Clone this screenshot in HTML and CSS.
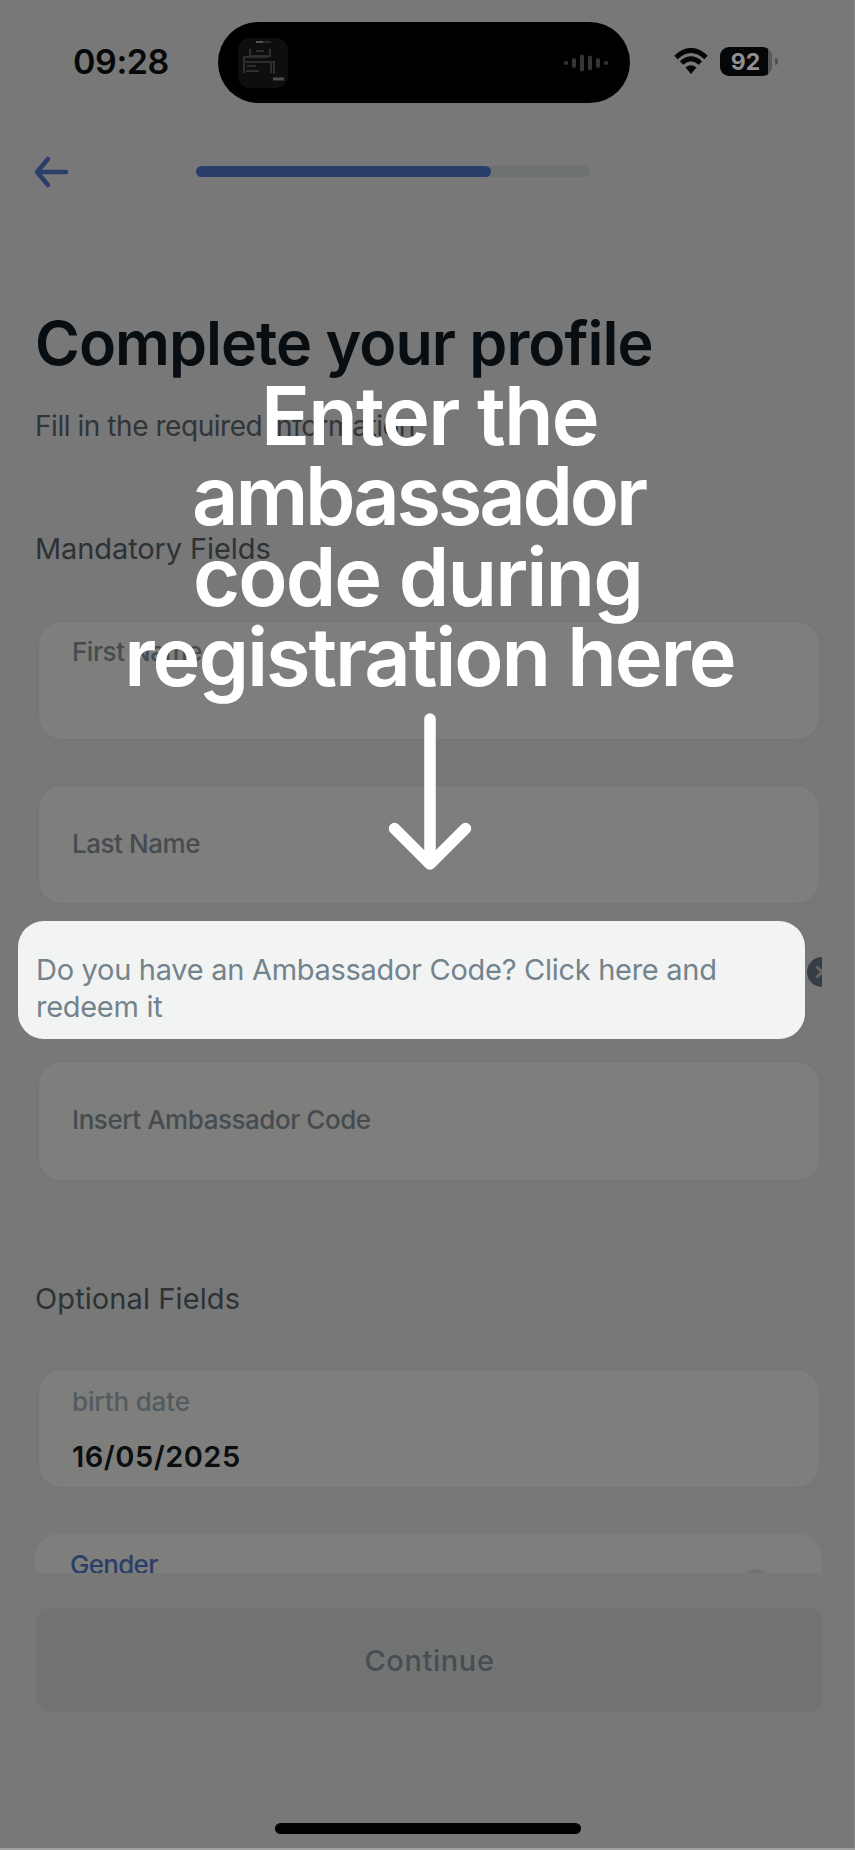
FILE: index.html
```html
<!DOCTYPE html>
<html lang="en">
<head>
<meta charset="utf-8">
<title>Complete your profile</title>
<link rel="stylesheet" href="styles.css">
</head>
<body>
<div class="screen">
  <header class="status">
    <span class="clock">09:28</span>
    <div class="island">
      <svg class="album" viewBox="0 0 50 50" width="50" height="50">
        <rect width="50" height="50" rx="12" fill="#0e0e0e"/>
        <g fill="none" stroke="#2c2e30" stroke-width="2">
          <path d="M18 4h15" stroke="#26282a"/><path d="M18 4h7" stroke="#505254"/>
          <path d="M12 11v7h20v-7M18 13h8M6 18v17M6 24h30v12M6 19h24M9 28h9M8 33h13M33 25v10"/>
          <path d="M35 41h11" stroke="#4c4e50" stroke-width="3"/>
        </g>
      </svg>
      <svg class="wave" viewBox="0 0 46 20" width="46" height="20" stroke="#343637" stroke-width="4" stroke-linecap="round">
        <path d="M3 10h.1M11 7v6M19 3.500v13M27 4.500v11M35 7v6M43 10h.1"/>
      </svg>
    </div>
    <svg class="wifi" viewBox="0 0 34 26" width="34" height="26">
      <path d="M2 9.500Q17-4.500 32 9.500" fill="none" stroke="#050607" stroke-width="5"/>
      <path d="M7.500 15Q17 6.500 26.500 15" fill="none" stroke="#050607" stroke-width="5"/>
      <path d="M11.500 19.500Q17 15 22.500 19.500L17 26z" fill="#050607"/>
    </svg>
    <span class="battery"><b>92</b></span>
    <i class="nub"></i>
  </header>
  <nav class="top">
    <svg class="back" viewBox="0 0 36 34" width="36" height="34" fill="none" stroke="#293f69" stroke-width="4.500" stroke-linecap="round" stroke-linejoin="round">
      <path d="M33 17H4M15 4L4 17l11 13"/>
    </svg>
    <div class="progress"><div class="progress-fill"></div></div>
  </nav>
  <main class="form">
    <h1>Complete your profile</h1>
    <p class="sub">Fill in the required information</p>
    <h2 class="mandatory">Mandatory Fields</h2>
    <div class="field first"><label>First Name</label></div>
    <div class="field last"><label>Last Name</label></div>
    <div class="ask">
      <p class="spot">Do you have an Ambassador Code? Click here and<br>redeem it</p>
      <svg class="clear" viewBox="0 0 16 30" width="16" height="30">
        <circle cx="16" cy="15" r="15" fill="#363d43"/>
        <path d="M10.500 9.500L21.500 20.500M10.500 20.500L21.500 9.500" stroke="#666" stroke-width="3"/>
      </svg>
    </div>
    <div class="field code"><label>Insert Ambassador Code</label></div>
    <h2 class="optional">Optional Fields</h2>
    <div class="field birth"><label>birth date</label><strong>16/05/2025</strong></div>
    <div class="gender"><label>Gender</label><i class="knob"></i></div>
  </main>
  <button class="continue">Continue</button>
  <div class="home"></div>
  <div class="coach">
    <span class="l1">Enter the</span>
    <span class="l2">ambassador</span>
    <span class="l3">code during</span>
    <span class="l4">registration here</span>
    <svg class="down" viewBox="0 0 86 160" width="86" height="160" fill="none" stroke="#fff" stroke-width="11.500" stroke-linecap="round" stroke-linejoin="round">
      <path d="M43 7V152M7.500 116.500L43 152l35.500-35.500"/>
    </svg>
  </div>
</div>
</body>
</html>
```
FILE: styles.css
```css
* { box-sizing: border-box; margin: 0; padding: 0; }
body { background: #787878; font-family: Inter, "Liberation Sans", sans-serif; }
.screen {
  position: relative; width: 855px; height: 1850px; overflow: hidden;
  display: flex; flex-direction: column;
  background: #787878; border-right: 1px solid #8a8a8a; border-bottom: 2px solid #a0a0a0;
  white-space: nowrap;
}

.status { display: flex; height: 125px; padding: 22px 0 0 73px; align-items: flex-start; }
.clock { width: 145px; height: 80px; line-height: 80px; font-size: 34px; font-weight: 600; letter-spacing: -.4px; color: #060809; }
.island {
  width: 412px; height: 81px; border-radius: 41px; background: #000;
  display: flex; align-items: center; justify-content: space-between; padding: 0 21px 0 20px;
}
.wifi { margin: 26px 0 0 44px; }
.battery {
  width: 52px; height: 29px; margin: 25px 0 0 12px; border-radius: 9px;
  background: linear-gradient(90deg, #050607 48px, #55585a 48px);
  color: #909090; font-size: 23px; line-height: 30px; text-align: center; padding-right: 1px;
}
.battery b { font-weight: 700; }
.nub { width: 3px; height: 7px; margin: 36px 0 0 3px; border-radius: 0 3px 3px 0; background: #4e5254; }

.top { display: flex; height: 95px; padding: 30px 0 0 33px; align-items: flex-start; }
.progress { width: 394px; height: 11px; margin: 11px 0 0 127px; border-radius: 6px; background: #6d7273; }
.progress-fill { width: 295px; height: 11px; border-radius: 6px; background: #293f69; }

.form { height: 1353px; overflow: hidden; padding: 83px 0 0 35px; }
h1 { font-size: 61px; line-height: 80px; font-weight: 600; letter-spacing: -1px; color: #080d11; }
.sub { font-size: 28px; line-height: 40px; margin-top: 23px; letter-spacing: -.45px; color: #2f3539; }
h2 { font-size: 29px; line-height: 40px; font-weight: 400; letter-spacing: -.1px; color: #2c3236; }
.mandatory { margin-top: 83px; }
.field {
  width: 780px; height: 117px; margin-left: 4px; padding: 0 33px; border-radius: 22px;
  background: #7e7e7c; box-shadow: 0 0 2px #707070; display: flex; flex-direction: column;
}
.field label { font-size: 26px; line-height: 40px; font-weight: 500; letter-spacing: -.45px; color: #454c51; }
.first { margin-top: 52.500px; padding-top: 10px; }
.last { margin-top: 47px; padding-top: 38px; }
.ask { display: flex; height: 118px; margin: 18px 0 0 -17px; align-items: flex-start; }
.spot {
  width: 787px; height: 118px; border-radius: 26px; background: #f2f3f3;
  padding: 30px 0 0 18px; font-size: 29px; line-height: 37.500px; letter-spacing: -.29px; color: #73838c;
}
.clear { margin: 36px 0 0 1px; }
.code { margin-top: 23px; height: 118px; padding-top: 38px; }
.optional { margin-top: 99px; letter-spacing: .1px; }
.birth { margin-top: 51.500px; padding-top: 12px; }
.birth label { letter-spacing: -.15px; color: #535b61; }
.birth strong { font-size: 29px; line-height: 40px; font-weight: 600; margin-top: 15px; letter-spacing: .5px; color: #0b0e10; }
.gender {
  display: flex; justify-content: space-between; width: 787px; height: 117px; margin-top: 47px;
  border-radius: 24px; background: #7e7e7c; padding: 11px 51px 0 35px;
}
.gender label { font-size: 26px; line-height: 40px; font-weight: 500; letter-spacing: -.7px; color: #293f69; }
.knob { width: 30px; height: 30px; margin-top: 24px; border-radius: 50%; background: #707171; }

.continue {
  width: 787px; height: 104px; margin: 35px 0 0 36px; border: 0; border-radius: 14px;
  background: #727474; color: #474e53; font: 500 29px/104px Inter, sans-serif; letter-spacing: .6px; padding-top: 1px;
}
.home { width: 306px; height: 11px; margin: 111px 0 0 275px; border-radius: 6px; background: #000; flex: none; }

/* Coach mark drawn over the dimmed form */
.coach {
  position: absolute; left: 2px; top: 376px; width: 855px;
  display: flex; flex-direction: column; align-items: center;
  color: #fff; font-size: 81px; line-height: 80.400px; font-weight: 600;
}
.l1 { letter-spacing: -1.800px; }
.l2 { letter-spacing: -3.200px; padding-right: 22px; }
.l3 { letter-spacing: -1.900px; padding-right: 24px; }
.l4 { letter-spacing: -2.100px; }
.down { margin-top: 14px; }
```
